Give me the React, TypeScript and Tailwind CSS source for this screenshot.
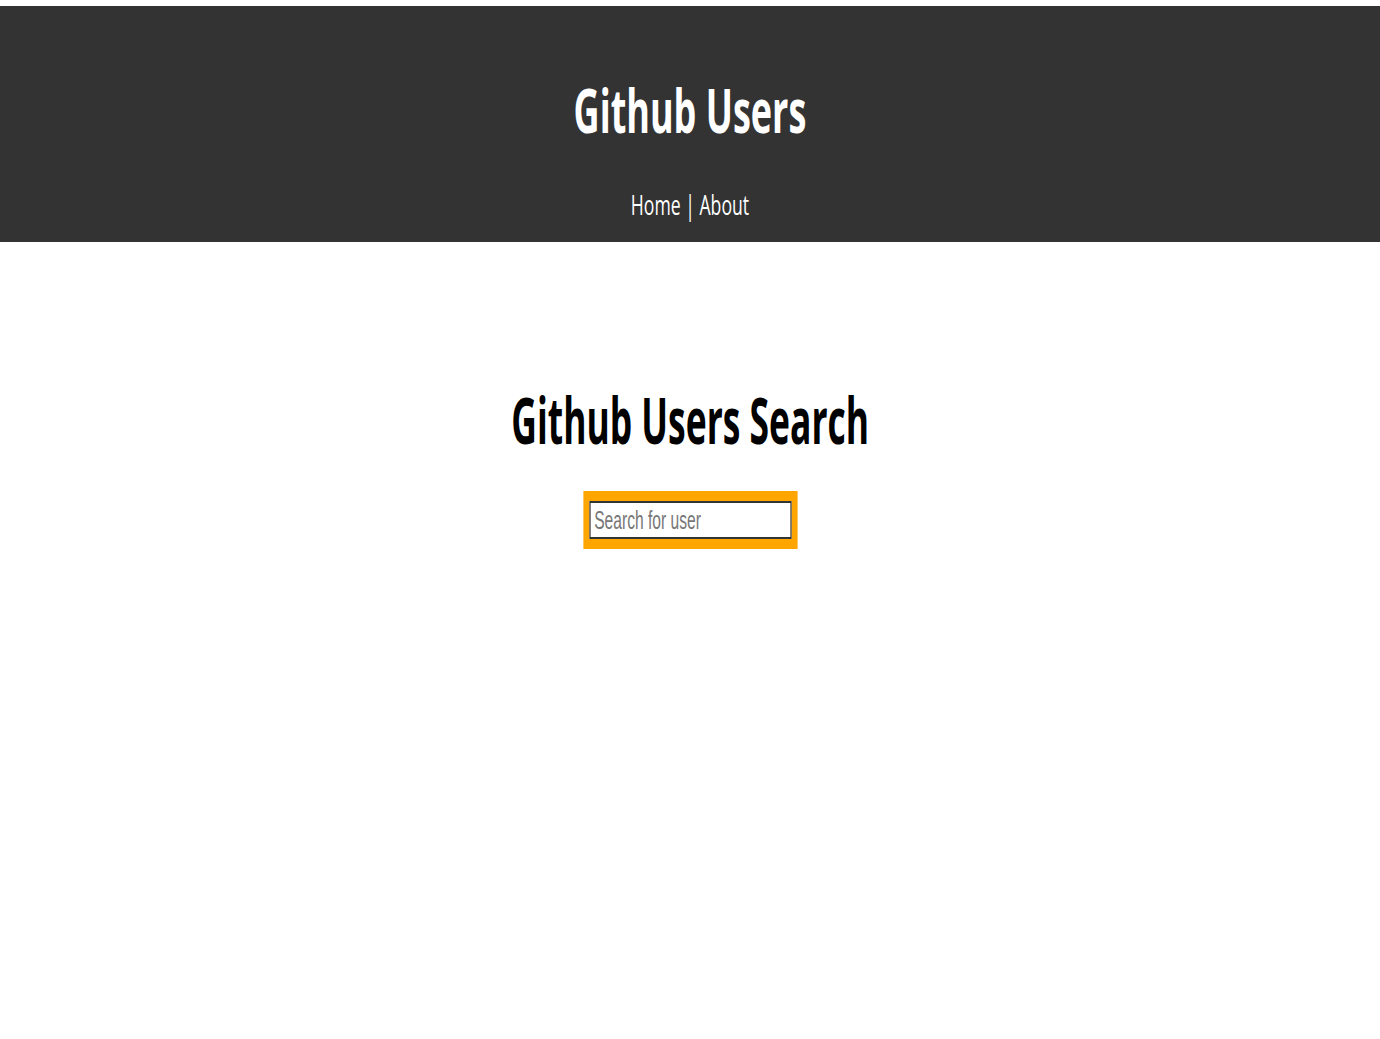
import React from 'react';

const App = () => {
  return (
    <div className="min-h-screen bg-white pt-[6px]" style={{ fontFamily: '"Open Sans", "Noto Sans", sans-serif' }}>
      <header className="bg-[#333333] h-[236px] flex flex-col items-center text-white">
        <h1 className="mt-[64px] h-[80px] flex items-center">
          <span className="inline-block scale-x-[0.6] text-[60px] font-bold leading-none whitespace-nowrap">Github Users</span>
        </h1>
        <nav className="mt-[40px] flex items-center">
          <span className="inline-block scale-x-[0.63] text-[28px] leading-none whitespace-nowrap">
            Home | About
          </span>
        </nav>
      </header>

      <main className="flex flex-col items-center">
        <h2 className="mt-[142px] h-[70px] flex items-center">
          <span className="inline-block scale-x-[0.545] text-[65px] font-bold leading-none text-black whitespace-nowrap">
            Github Users Search
          </span>
        </h2>
        <div className="mt-[37px] scale-x-[0.6]">
          <div className="bg-[#ffa500] w-[357px] h-[58px] px-[10px] py-[10px]">
            <input
              type="text"
              placeholder="Search for user"
              className="w-full h-full border-2 border-[#333] bg-white px-[6px] text-[26px] text-black placeholder:text-[#777] outline-none"
              style={{ fontFamily: '"Liberation Sans", Arial, sans-serif' }}
            />
          </div>
        </div>
      </main>
    </div>
  );
};

export default App;
